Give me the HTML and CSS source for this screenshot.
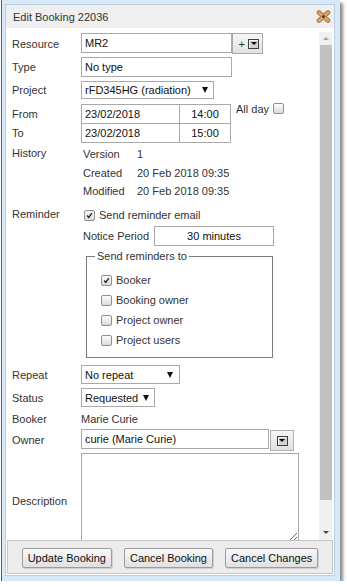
FILE: index.html
```html
<!DOCTYPE html>
<html lang="en">
<head>
<meta charset="UTF-8">
<title>Edit Booking 22036</title>
<link rel="stylesheet" href="styles.css">
</head>
<body>
<div class="window">
  <div class="dialog">
    <div class="titlebar">
      <span class="title">Edit Booking 22036</span>
      <svg class="close" viewBox="0 0 15 13" width="15" height="13">
        <path d="M3 2.5 L12 10.5 M12 2.5 L3 10.5" stroke="#a8763f" stroke-width="4.6" stroke-linecap="round"/>
        <path d="M3 2.5 L12 10.5 M12 2.5 L3 10.5" stroke="#dba66d" stroke-width="2.6" stroke-linecap="round"/>
        <circle cx="7.5" cy="6.5" r="1.6" fill="#5b3b1e"/>
      </svg>
    </div>

    <div class="content">
      <form class="form">
        <div class="row r-resource">
          <span class="lbl">Resource</span>
          <input class="txt w-res" value="MR2">
          <span class="addbtn">+ <span class="mini"><i class="tri"></i></span></span>
        </div>

        <div class="row r-type">
          <span class="lbl">Type</span>
          <input class="txt w-res" value="No type">
        </div>

        <div class="row r-project">
          <span class="lbl">Project</span>
          <div class="select w-project"><span>rFD345HG (radiation)</span><i class="arrow"></i></div>
        </div>

        <div class="row r-from">
          <span class="lbl">From</span>
          <input class="txt w-date" value="23/02/2018">
          <input class="txt w-time" value="14:00">
          <span class="allday">All day <span class="cb"></span></span>
        </div>

        <div class="row r-to">
          <span class="lbl">To</span>
          <input class="txt w-date" value="23/02/2018">
          <input class="txt w-time" value="15:00">
        </div>

        <div class="row block r-history">
          <span class="lbl top">History</span>
          <div class="hist">
            <span>Version</span><span>1</span>
            <span>Created</span><span>20 Feb 2018 09:35</span>
            <span>Modified</span><span>20 Feb 2018 09:35</span>
          </div>
        </div>

        <div class="row block r-reminder">
          <span class="lbl top">Reminder</span>
          <div class="col">
            <label class="check-line first">
              <span class="cb on"><svg viewBox="0 0 11 11"><path d="M2.6 5.6 L4.6 7.8 L8.4 2.6"/></svg></span>
              Send reminder email
            </label>
            <div class="notice">
              <span class="notice-lbl">Notice Period</span>
              <input class="txt w-notice" value="30 minutes">
            </div>
            <fieldset class="send-to">
              <legend>Send reminders to</legend>
              <label class="check-line">
                <span class="cb on"><svg viewBox="0 0 11 11"><path d="M2.6 5.6 L4.6 7.8 L8.4 2.6"/></svg></span>
                Booker
              </label>
              <label class="check-line"><span class="cb"></span> Booking owner</label>
              <label class="check-line"><span class="cb"></span> Project owner</label>
              <label class="check-line"><span class="cb"></span> Project users</label>
            </fieldset>
          </div>
        </div>

        <div class="row r-repeat">
          <span class="lbl">Repeat</span>
          <div class="select w-repeat"><span>No repeat</span><i class="arrow"></i></div>
        </div>

        <div class="row r-status">
          <span class="lbl">Status</span>
          <div class="select w-status"><span>Requested</span><i class="arrow"></i></div>
        </div>

        <div class="row r-booker">
          <span class="lbl">Booker</span>
          <span class="value">Marie Curie</span>
        </div>

        <div class="row r-owner">
          <span class="lbl">Owner</span>
          <input class="txt w-owner" value="curie (Marie Curie)">
          <span class="pickbtn"><span class="mini"><i class="tri"></i></span></span>
        </div>

        <div class="row r-desc">
          <span class="lbl">Description</span>
          <textarea class="desc"></textarea>
        </div>
      </form>

      <div class="scrollbar">
        <div class="sb-btn"><i class="sb-up"></i></div>
        <div class="sb-thumb"></div>
        <div class="sb-fill"></div>
        <div class="sb-btn down"><i class="sb-down"></i></div>
      </div>
    </div>

    <div class="buttons">
      <button class="btn" type="button">Update Booking</button>
      <button class="btn" type="button">Cancel Booking</button>
      <button class="btn" type="button">Cancel Changes</button>
    </div>
  </div>
</div>
</body>
</html>
```

FILE: styles.css
```css
* {
    box-sizing: border-box;
}
body {
    margin: 0;
    background: #fff;
    font-family: "Liberation Sans", Arial, sans-serif;
    font-size: 11px;
    color: #222;
}
.window {
    margin-left: 1px;
    width: 339px;
    padding: 5px 6px 6px 4px;
    background: #d7e9f9;
    border-left: 1px solid #56606a;
    box-shadow: 3px 3px 3px rgba(0, 0, 0, 0.45);
}
.dialog {
    height: 570px;
    background: #fff;
    display: flex;
    flex-direction: column;
    box-shadow: 0 0 0 1px #b7cee3;
}
.titlebar {
    height: 23px;
    flex: none;
    background: #efefef;
    display: flex;
    align-items: center;
    justify-content: space-between;
    padding: 0 3px 0 7px;
    color: #333;
}
.close {
    display: block;
}

/* form area */
.content {
    height: 512px;
    flex: none;
    display: flex;
    overflow: hidden;
}
.form {
    flex: 1;
    margin: 0;
    padding: 5px 0 0 6px;
}
.row {
    display: flex;
    align-items: center;
    margin-bottom: 4px;
}
.row.block {
    align-items: flex-start;
}
.lbl {
    width: 69px;
    flex: none;
    color: #333;
}
.lbl.top {
    line-height: 13px;
}
.txt {
    height: 20px;
    margin: 0;
    padding: 0 3px;
    border: 1px solid #a9a9a9;
    background: #fff;
    font: inherit;
    color: #111;
    outline: none;
}
.w-res { width: 151px; }
.w-date { width: 99px; }
.w-time { width: 52px; margin-left: -1px; text-align: center; }
.w-notice { width: 120px; text-align: center; }
.w-owner { width: 188px; }

.r-resource { margin-bottom: 3px; }
.r-resource .txt { align-self: flex-start; }
.r-project { margin-bottom: 5px; }
.r-from { margin-bottom: -1px; }
.r-to { margin-bottom: 4px; }
.r-history { margin-bottom: 7.5px; }
.r-reminder { margin-bottom: 7px; }
.r-repeat { margin-bottom: 4px; }
.r-status { margin-bottom: 5px; }
.r-booker { height: 14px; margin-bottom: 3px; }
.r-owner { align-items: flex-start; height: 22px; margin-bottom: 2px; }
.r-owner .lbl { align-self: center; }
.r-desc .lbl { padding-top: 6px; }

.addbtn {
    width: 31px;
    height: 21px;
    display: flex;
    align-items: center;
    justify-content: flex-end;
    gap: 3px;
    padding-right: 3px;
    border: 1px solid #a8a8a8;
    background: linear-gradient(#f6f6f6, #e2e2e2);
    color: #333;
}
.pickbtn {
    width: 24px;
    height: 21px;
    margin: 1px 0 0 1px;
    display: flex;
    align-items: center;
    justify-content: center;
    border: 1px solid #b0b0b0;
    background: linear-gradient(#f6f6f6, #e0e0e0);
}
.mini {
    width: 11px;
    height: 10px;
    display: flex;
    align-items: center;
    justify-content: center;
    border: 1px solid #3f3f3f;
    background: #d2d2d2;
    box-shadow: inset 1px 1px 0 #f2f2f2;
}
.tri {
    border-left: 3px solid transparent;
    border-right: 3px solid transparent;
    border-top: 3px solid #000;
}

.select {
    display: flex;
    align-items: center;
    justify-content: space-between;
    padding: 0 5px 0 3px;
    border: 1px solid #a9a9a9;
    background: #fff;
    color: #111;
}
.w-project { width: 133px; height: 18px; }
.w-repeat { width: 99px; height: 19px; padding-right: 6px; }
.w-status { width: 74px; height: 19px; }
.arrow {
    border-left: 3px solid transparent;
    border-right: 3px solid transparent;
    border-top: 6px solid #111;
}

.allday {
    align-self: flex-start;
    height: 11px;
    margin: -1px 0 0 5px;
    display: flex;
    align-items: center;
    gap: 4px;
    color: #333;
}

.cb {
    width: 11px;
    height: 11px;
    flex: none;
    display: inline-block;
    border: 1px solid #8f8f8f;
    border-radius: 2px;
    background: linear-gradient(#fdfdfd, #dadada);
}
.cb svg {
    display: block;
    width: 9px;
    height: 9px;
}
.cb path {
    fill: none;
    stroke: #222;
    stroke-width: 1.7;
}

.hist {
    display: grid;
    grid-template-columns: 54px auto;
    line-height: 18.5px;
    padding-left: 2px;
    margin-top: -2px;
    color: #333;
}
.col {
    display: flex;
    flex-direction: column;
}
.check-line {
    display: flex;
    align-items: center;
    gap: 4px;
    height: 20px;
    color: #333;
}
.check-line.first {
    height: 14px;
    padding-left: 3px;
    gap: 4px;
}
.notice {
    display: flex;
    align-items: center;
    margin-top: 4px;
    padding-left: 2px;
    color: #333;
}
.notice-lbl {
    width: 71px;
}
.send-to {
    width: 187px;
    margin: 4px 0 0 5px;
    padding: 7px 0 7px 14px;
    border: 1px solid #7c7c7c;
}
.send-to legend {
    margin-left: -6px;
    padding: 0 2px;
    line-height: 13px;
    color: #333;
}

.value {
    color: #333;
}
.desc {
    width: 218px;
    height: 89px;
    margin: 0;
    padding: 2px 3px;
    border: 1px solid #a9a9a9;
    font: inherit;
    resize: vertical;
    outline: none;
}

/* scrollbar */
.scrollbar {
    width: 13px;
    height: 508px;
    flex: none;
    margin: 4px 2px 0 0;
    background: #f0f0f0;
    display: flex;
    flex-direction: column;
}
.sb-btn {
    height: 13px;
    display: flex;
    align-items: center;
    justify-content: center;
}
.sb-btn.down {
    height: 15px;
}
.sb-up {
    border-left: 3px solid transparent;
    border-right: 3px solid transparent;
    border-bottom: 3px solid #a3a3a3;
}
.sb-down {
    border-left: 3px solid transparent;
    border-right: 3px solid transparent;
    border-top: 3px solid #4a4a4a;
}
.sb-thumb {
    height: 455px;
    margin-left: 1px;
    background: #c1c1c1;
}
.sb-fill {
    flex: 1;
}

/* bottom buttons */
.buttons {
    height: 34px;
    flex: none;
    margin: 0 1px 1px;
    padding-top: 2px;
    border: 1px solid #c5c5c5;
    background: #ececec;
    display: flex;
    justify-content: center;
    align-items: center;
    gap: 12px;
}
.btn {
    height: 20px;
    margin: 0;
    padding: 0 5px;
    border: 1px solid #9c9c9c;
    border-radius: 2px;
    background: linear-gradient(#f8f8f8, #e0e0e0);
    box-shadow: 1px 1px 0 #cfcfcf;
    font: inherit;
    color: #111;
}
```
